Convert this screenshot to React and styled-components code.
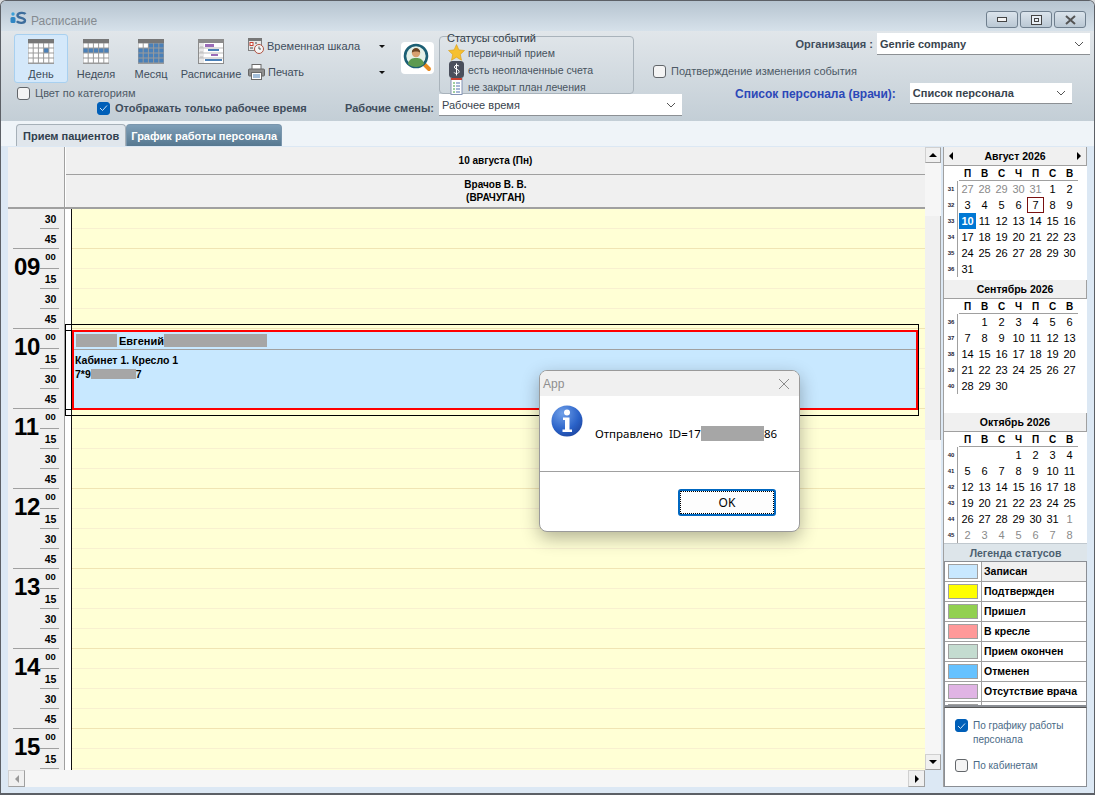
import React from 'react';
import styled, { createGlobalStyle } from 'styled-components';

const GlobalStyle = createGlobalStyle`
  html, body {
    margin: 0;
    padding: 0;
    background: #d8dadc;
    overflow: hidden;
  }
  * { box-sizing: border-box; }
`;

const Window = styled.div`
  width: 1095px;
  height: 795px;
  display: flex;
  flex-direction: column;
  position: relative;
  overflow: hidden;
  border: 1px solid #5c6066;
  border-bottom-width: 2px;
  border-radius: 6px 6px 0 0;
  background: #dce8f4;
  font-family: "Liberation Sans", Arial, sans-serif;
  color: #000;
`;

const TitleBar = styled.div`
  height: 30px;
  flex: none;
  display: flex;
  align-items: flex-start;
  padding: 10px 8px 0 9px;
  background: linear-gradient(to bottom, #b6c4d0, #d6e1ea);
`;

const TitleText = styled.span`
  margin-left: 4px;
  margin-top: 3px;
  font-size: 12px;
  color: #858b91;
`;

const WindowButtons = styled.div`
  margin-left: auto;
  display: flex;
  gap: 2px;
`;

const WindowButton = styled.div`
  width: 32px;
  height: 17px;
  display: flex;
  align-items: center;
  justify-content: center;
  border: 1px solid #6f7f8e;
  border-radius: 3px;
  background: linear-gradient(to bottom, #dbe4ec, #bac8d4);
`;

const Ribbon = styled.div`
  height: 90px;
  flex: none;
  display: flex;
  padding-left: 13px;
  background: linear-gradient(to bottom, #e1e6ea, #c3ced6);
`;

const LeftGroup = styled.div`
  width: 424px;
  flex: none;
  display: flex;
  flex-direction: column;
`;

const ToolRow = styled.div`
  display: flex;
  margin-top: 3px;
  height: 49px;
`;

const ToolButton = styled.div`
  width: ${(p) => p.$w}px;
  height: 49px;
  display: flex;
  flex-direction: column;
  align-items: center;
  justify-content: flex-end;
  padding-bottom: 2px;
  gap: 4px;
  font-size: 11px;
  color: #3f4d5c;
  border: 1px solid ${(p) => (p.$active ? '#a8d0f0' : 'transparent')};
  border-radius: 3px;
  background: ${(p) => (p.$active ? '#d4e8fa' : 'transparent')};
`;

const SmallTools = styled.div`
  width: 145px;
  margin-left: 4px;
  display: flex;
  flex-direction: column;
  gap: 8px;
  padding-top: 3px;
`;

const SmallTool = styled.div`
  display: flex;
  align-items: center;
  gap: 3px;
  height: 18px;
  font-size: 11px;
  color: #3f4d5c;
`;

const DropArrow = styled.span`
  margin-left: auto;
  margin-right: 8px;
  width: 0;
  height: 0;
  border-left: 3px solid transparent;
  border-right: 3px solid transparent;
  border-top: 3px solid #111;
`;

const SearchButton = styled.div`
  width: 33px;
  height: 32px;
  margin-left: 8px;
  margin-top: 8px;
  border-radius: 4px;
  background: #fff;
  display: flex;
  align-items: center;
  justify-content: center;
`;

const CheckRow = styled.label`
  display: flex;
  align-items: center;
  gap: 5px;
  font-size: 11px;
  color: ${(p) => p.$color || '#4d5a66'};
  font-weight: ${(p) => (p.$bold ? 700 : 400)};
`;

const CategoryRow = styled(CheckRow)`
  margin-top: 3px;
  margin-left: 3px;
  height: 14px;
`;

const ShiftRow = styled.div`
  display: flex;
  align-items: center;
  height: 16px;
  margin-top: 0;
  padding-left: 83px;
  padding-right: 4px;
`;

const ShiftLabel = styled.span`
  margin-left: auto;
  font-size: 11px;
  font-weight: 700;
  color: #3f4d5c;
`;

const Box = styled.span`
  width: 13px;
  height: 13px;
  flex: none;
  display: flex;
  align-items: center;
  justify-content: center;
  border-radius: 3px;
  border: 1px solid ${(p) => (p.$on ? '#005fb8' : '#62666a')};
  background: ${(p) => (p.$on ? '#005fb8' : '#f4f4f4')};
`;

const MiddleGroup = styled.div`
  width: 244px;
  flex: none;
  display: flex;
  flex-direction: column;
  margin-left: 1px;
`;

const StatusBox = styled.div`
  width: 195px;
  height: 58px;
  margin-top: 5px;
  position: relative;
  border: 1px solid #a9b3bb;
  border-radius: 4px;
  padding: 7px 0 0 8px;
  display: flex;
  flex-direction: column;
`;

const StatusTitle = styled.span`
  position: absolute;
  left: 7px;
  top: -5px;
  font-size: 11px;
  font-weight: 400;
  color: #333d47;
  line-height: 13px;
`;

const StatusRow = styled.div`
  display: flex;
  align-items: center;
  height: 17.5px;
  gap: 3px;
  font-size: 10.5px;
  color: #47535e;
`;

const Select = styled.div`
  width: ${(p) => p.$w}px;
  height: ${(p) => p.$h || 22}px;
  flex: none;
  display: flex;
  align-items: center;
  justify-content: space-between;
  padding: 0 6px 0 3px;
  background: #fff;
  border-bottom: 1px solid #8c9094;
  font-size: 11px;
  color: #38434d;
`;

const RightGroup = styled.div`
  flex: 1;
  display: flex;
  flex-direction: column;
`;

const OrgRow = styled.div`
  display: flex;
  justify-content: flex-end;
  align-items: center;
  gap: 4px;
  margin-top: 2px;
  padding-right: 4px;
  font-size: 11px;
  font-weight: 700;
  color: #3f4d5c;
`;

const ConfirmRow = styled(CheckRow)`
  margin: 9px 0 0 -30px;
  height: 14px;
`;

const StaffRow = styled.div`
  display: flex;
  align-items: center;
  margin-top: 5px;
  padding-left: 52px;
  gap: 14px;
  font-size: 12px;
  font-weight: 700;
  color: #2c48b8;
`;

const TabStrip = styled.div`
  height: 25px;
  flex: none;
  display: flex;
  align-items: flex-end;
  padding-left: 15px;
  background: #eff4f8;
`;

const Tab = styled.div`
  height: 22px;
  display: flex;
  align-items: center;
  padding: 0 ${(p) => (p.$active ? 6 : 4)}px;
  font-size: 11px;
  font-weight: 700;
  border: 1px solid ${(p) => (p.$active ? '#a6b0b8' : '#7a96ad')};
  border-bottom: none;
  border-radius: 4px 4px 0 0;
  color: ${(p) => (p.$active ? '#31404e' : '#fff')};
  background: ${(p) =>
    p.$active ? '#e0e6ec' : 'linear-gradient(to bottom, #7f9fb8, #567890)'};
`;

const Main = styled.div`
  flex: 1;
  min-height: 0;
  display: flex;
  padding: 1px 7px 0;
`;

const SchedulePane = styled.div`
  width: 933px;
  flex: none;
  display: flex;
  flex-direction: column;
  height: 640px;
`;

const ScheduleTop = styled.div`
  flex: 1;
  min-height: 0;
  display: flex;
`;

const Grid = styled.div`
  width: 917px;
  flex: none;
  display: flex;
  flex-direction: column;
`;

const HeadRow = styled.div`
  display: flex;
  height: 62px;
  flex: none;
  background: #f0f0f0;
  border-bottom: 2px solid #a0a0a0;
`;

const HeadCorner = styled.div`
  width: 57px;
  flex: none;
  border-right: 1px solid #a0a0a0;
`;

const HeadColumns = styled.div`
  flex: 1;
  display: flex;
  flex-direction: column;
  border-left: 1px solid #fff;
`;

const HeadDate = styled.div`
  height: 28px;
  flex: none;
  display: flex;
  align-items: center;
  justify-content: center;
  border-bottom: 1px solid #a0a0a0;
  font-size: 10px;
  font-weight: 700;
`;

const HeadDoctor = styled.div`
  flex: 1;
  display: flex;
  align-items: center;
  justify-content: center;
  text-align: center;
  font-size: 10px;
  line-height: 13px;
  font-weight: 700;
`;

const GridBody = styled.div`
  flex: 1;
  min-height: 0;
  display: flex;
  overflow: hidden;
  position: relative;
`;

const TimeColumn = styled.div`
  width: 57px;
  flex: none;
  background: #f0f0f0;
  border-right: 1px solid #a0a0a0;
`;

const HourBlock = styled.div`
  position: relative;
  padding-left: 6px;
  display: flex;
`;

const HourNumber = styled.div`
  width: 26px;
  flex: none;
  font-size: 24px;
  font-weight: 700;
  line-height: 28px;
  margin-top: 4px;
  letter-spacing: -0.3px;
`;

const MinuteColumn = styled.div`
  width: 19px;
  flex: none;
`;

const HourLine = styled.div`
  position: absolute;
  left: 5px;
  right: 5px;
  top: -1px;
  height: 1px;
  background: #a0a0a0;
`;

const Minute = styled.div`
  height: 20px;
  border-bottom: 1px solid #a0a0a0;
  display: flex;
  align-items: center;
  justify-content: center;
  font-size: ${(p) => (p.$top ? 9.5 : 10.5)}px;
  font-weight: 700;
  padding-bottom: ${(p) => (p.$top ? 4 : 0)}px;
  padding-left: 2px;
`;

const FirstMinutes = styled.div`
  padding-left: 32px;
  width: 51px;
`;

const WhiteGutter = styled.div`
  width: 7px;
  flex: none;
  background: #fff;
  border-right: 1px solid #111;
`;

const Slots = styled.div`
  flex: 1;
  background: #ffffd5;
`;

const Slot = styled.div`
  height: 20px;
  border-bottom: 1px solid ${(p) => (p.$hour ? '#f0e4b4' : '#f8f0d0')};
`;

const EventFrame = styled.div`
  position: absolute;
  left: 57px;
  top: 115px;
  width: 854px;
  height: 92px;
  border: 1px solid #000;
  padding: 5px 0 5px;
`;

const EventInner = styled.div`
  height: 80px;
  display: flex;
  border-top: 1px solid #000;
  border-bottom: 1px solid #000;
`;

const EventGutter = styled.div`
  width: 6px;
  flex: none;
  background: #fff;
  border-right: 1px solid #000;
`;

const Event = styled.div`
  flex: 1;
  margin: -1px 0;
  background: #c8e8ff;
  border: 2px solid #f00;
  font-size: 10px;
  font-weight: 700;
`;

const EventHead = styled.div`
  height: 18px;
  display: flex;
  align-items: center;
  padding-left: 1px;
  border-bottom: 1px solid #a0a0a0;
  font-size: 11px;
`;

const EventBody = styled.div`
  padding: 3px 1px;
  font-size: 10.5px;
  line-height: 14px;
`;

const Redact = styled.span`
  display: inline-block;
  vertical-align: top;
  height: ${(p) => p.$h}px;
  width: ${(p) => p.$w}px;
  background: #a6a6a6;
  margin: ${(p) => p.$m || '0'};
`;

const VScroll = styled.div`
  width: 16px;
  flex: none;
  display: flex;
  flex-direction: column;
  background: #f4f4f4;
`;

const ScrollButton = styled.div`
  width: ${(p) => p.$w || 16}px;
  height: ${(p) => p.$h || 16}px;
  flex: none;
  background: #f0f0f0;
  border: 1px solid #d0d0d0;
  border-right-color: #a0a0a0;
  border-bottom-color: #a0a0a0;
  display: flex;
  align-items: center;
  justify-content: center;
`;

const Thumb = styled.div`
  flex: none;
  background: #f0f0f0;
  border-right: 1px solid #a0a0a0;
  ${(p) => (p.$h ? `height: ${p.$h}px;` : '')}
  ${(p) => (p.$w ? `width: ${p.$w}px;` : '')}
`;

const Track = styled.div`
  flex: 1;
  background-color: #f6f6f6;
  background-image: radial-gradient(#e4e4e4 0.5px, transparent 0.6px);
  background-size: 2px 2px;
`;

const HScroll = styled.div`
  height: 17px;
  flex: none;
  display: flex;
  background: #f4f4f4;
  width: 917px;
`;

const Sidebar = styled.div`
  width: 144px;
  flex: none;
  margin-left: 2px;
  height: 640px;
  display: flex;
  flex-direction: column;
  background: #fff;
  border-left: 1px solid #a0a0a0;
`;

const MonthHeader = styled.div`
  height: 19px;
  flex: none;
  display: flex;
  align-items: center;
  justify-content: space-between;
  padding: 0 5px;
  background: #f0f0f0;
  border-bottom: 1px solid #a0a0a0;
  border-right: 1px solid #a0a0a0;
  font-size: 10.5px;
  font-weight: 700;
`;

const MonthBody = styled.div`
  height: ${(p) => p.$h}px;
  flex: none;
  padding-left: 1px;
`;

const DayNames = styled.div`
  display: grid;
  grid-template-columns: repeat(7, 17px);
  margin-left: 14px;
  width: 119px;
  height: 15px;
  align-items: center;
  justify-items: center;
  border-bottom: 1px solid #a0a0a0;
  font-size: 10px;
  font-weight: 700;
`;

const WeekRow = styled.div`
  display: flex;
  height: 16px;
`;

const WeekNumber = styled.div`
  width: 13px;
  flex: none;
  border-right: 1px solid #a0a0a0;
  font-size: 6px;
  font-weight: 700;
  text-align: center;
  line-height: 17px;
  margin-right: 1px;
  color: #223;
`;

const DayCell = styled.div`
  width: 17px;
  height: 16px;
  flex: none;
  text-align: center;
  font-size: 11px;
  line-height: 16px;
  color: ${(p) => (p.$today ? '#fff' : p.$muted ? '#8a8a8a' : '#000')};
  font-weight: ${(p) => (p.$today ? 700 : 400)};
  background: ${(p) => (p.$today ? '#0078d4' : 'transparent')};
  box-shadow: ${(p) => (p.$ring ? 'inset 0 0 0 1px #7a1010' : 'none')};
`;

const LegendTitle = styled.div`
  height: 18px;
  flex: none;
  display: flex;
  align-items: center;
  justify-content: center;
  background: #dde5ea;
  font-size: 10.5px;
  font-weight: 700;
  color: #4c5f70;
  border-top: 1px solid #c0c8ce;
`;

const LegendTable = styled.div`
  height: 146px;
  flex: none;
  overflow: hidden;
  border: 1px solid #8a8e94;
  border-bottom-width: 2px;
`;

const LegendRow = styled.div`
  display: flex;
  height: 20px;
  border-bottom: 1px solid #a0a0a0;
`;

const LegendSwatchCell = styled.div`
  width: 37px;
  flex: none;
  border-right: 1px solid #a0a0a0;
  padding: 2px 3px;
`;

const LegendSwatch = styled.div`
  height: 15px;
  border: 1px solid #a0a0a0;
  background: ${(p) => p.$color};
`;

const LegendName = styled.div`
  flex: 1;
  padding-left: 2px;
  font-size: 10.5px;
  font-weight: 700;
  line-height: 18px;
  white-space: nowrap;
  background: ${(p) => (p.$first ? '#f0f0f0' : '#fff')};
`;

const FilterPanel = styled.div`
  flex: 1;
  border: 1px solid #8a8e94;
  border-top: 1px solid #555;
  padding: 11px 0 0 10px;
`;

const FilterRow = styled.div`
  display: flex;
  gap: 5px;
  font-size: 10px;
  line-height: 14px;
  color: #4a6a86;
  margin-bottom: ${(p) => p.$mb || 0}px;
`;

const Dialog = styled.div`
  position: absolute;
  left: 538px;
  top: 369px;
  width: 261px;
  height: 162px;
  display: flex;
  flex-direction: column;
  background: #fff;
  border: 1px solid #9a9a9a;
  border-radius: 8px;
  overflow: hidden;
  box-shadow: 0 6px 18px rgba(0, 0, 0, 0.3);
`;

const DialogTitle = styled.div`
  height: 25px;
  flex: none;
  display: flex;
  align-items: center;
  justify-content: space-between;
  padding: 0 9px 0 3px;
  background: #f0f0f0;
  font-size: 12px;
  color: #8e8e8e;
`;

const DialogBody = styled.div`
  height: 76px;
  flex: none;
  display: flex;
  padding: 9px 0 0 11px;
  border-bottom: 1px solid #a0a0a0;
`;

const DialogText = styled.div`
  margin: 21px 0 0 12px;
  font-family: "Noto Sans", sans-serif;
  font-size: 11.5px;
  line-height: 16px;
  white-space: pre;
`;

const DialogFooter = styled.div`
  flex: 1;
  display: flex;
  justify-content: flex-end;
  padding: 17px 23px 0 0;
`;

const OkButton = styled.div`
  width: 98px;
  height: 27px;
  display: flex;
  align-items: center;
  justify-content: center;
  border: 2px solid #0067c0;
  outline: 1px dotted #000;
  outline-offset: -3px;
  border-radius: 3px;
  background: #fdfdfd;
  font-family: "Noto Sans", sans-serif;
  font-size: 12px;
`;

const Chevron = () => (
  <svg width="10" height="6" viewBox="0 0 10 6">
    <path d="M1 1l4 4 4-4" fill="none" stroke="#555" strokeWidth="1" />
  </svg>
);

const Tick = () => (
  <svg width="9" height="8" viewBox="0 0 9 8">
    <path d="M1 4l2.5 2.5L8 1.5" fill="none" stroke="#cfe3f5" strokeWidth="1" />
  </svg>
);

// calendar icon: filled = list of [col,row] cells painted blue
const CalendarIcon = ({ filled, cols = 5, rows = 4 }) => {
  const cw = 26 / cols;
  const ch = 20 / rows;
  const cells = [];
  for (let r = 0; r < rows; r++) {
    for (let c = 0; c < cols; c++) {
      const on = filled(c, r);
      cells.push(
        <rect
          key={`${c}-${r}`}
          x={c * cw + 0.5}
          y={r * ch + 4.5}
          width={cw - 1}
          height={ch - 1}
          fill={on ? '#4a80b8' : '#fff'}
        />
      );
    }
  }
  return (
    <svg width="26" height="25" viewBox="0 0 26 25">
      <rect x="0" y="0" width="26" height="25" fill="#9a9a9a" />
      <rect x="0" y="0" width="26" height="4" fill="#777" />
      {cells}
    </svg>
  );
};

const ScheduleIcon = () => (
  <svg width="26" height="25" viewBox="0 0 26 25">
    <rect width="26" height="25" fill="#8c8c8c" />
    <rect x="1" y="4" width="24" height="20" fill="#fff" />
    <rect x="1" y="4" width="5" height="20" fill="#e8e8e8" />
    <rect x="7" y="5" width="9" height="3" fill="#9a6cb8" />
    <rect x="10" y="10" width="11" height="2" fill="#4a80b8" />
    <rect x="13" y="15" width="7" height="2" fill="#9a6cb8" />
    <rect x="7" y="20" width="17" height="2" fill="#4a80b8" />
    <path d="M2 8h3M2 13h3M2 18h3M1 9h24M1 14h24M1 19h24" stroke="#bbb" strokeWidth="1" />
  </svg>
);

const TimelineIcon = () => (
  <svg width="16" height="16" viewBox="0 0 16 16">
    <rect x="0.5" y="0.5" width="13" height="12" fill="#e8e8e8" stroke="#808080" />
    <rect x="0" y="0" width="14" height="3" fill="#777" />
    <rect x="2" y="4.5" width="3" height="3" fill="#fff" stroke="#c84030" strokeWidth="1" />
    <path d="M7 5h2M2 10h3" stroke="#999" strokeWidth="2" />
    <circle cx="11" cy="11" r="4.5" fill="#f4f4f4" stroke="#b05040" strokeWidth="1" />
    <path d="M11 8.5V11h2" fill="none" stroke="#555" strokeWidth="1" />
  </svg>
);

const PrintIcon = () => (
  <svg width="17" height="16" viewBox="0 0 17 16">
    <rect x="4" y="0.5" width="9" height="5" fill="#fff" stroke="#6a6a6a" />
    <rect x="0.5" y="5" width="16" height="7" rx="1" fill="#8f8f8f" stroke="#666" />
    <rect x="3.5" y="8.5" width="10" height="7" fill="#fff" stroke="#6a6a6a" />
    <path d="M5 11h7M5 13h7" stroke="#4a80b8" strokeWidth="1" />
  </svg>
);

const SearchPersonIcon = () => (
  <svg width="30" height="30" viewBox="0 0 30 30">
    <path d="M19 19l7 7" stroke="#e88a20" strokeWidth="4" strokeLinecap="round" />
    <circle cx="13" cy="13" r="11" fill="#e4f0e8" stroke="#1c5f74" strokeWidth="2.6" />
    <path d="M5 21c1-5 4-6 8-6s7 1 8 6c-2 2-5 3-8 3s-6-1-8-3z" fill="#5d9a50" />
    <circle cx="13" cy="10" r="4.2" fill="#d8a070" />
    <path d="M8.8 9.5c0-3 2-4.5 4.2-4.5s4.2 1.500 4.200 4.500c-1.500-1.500-6.500-1.500-8.400 0z" fill="#6a4424" />
  </svg>
);

const StarIcon = () => (
  <svg width="17" height="17" viewBox="0 0 17 17">
    <path
      d="M8.500.5l2.400 5.400 5.600.6-4.200 3.900 1.200 5.800-5-3-5 3 1.200-5.800L.5 6.500l5.600-.6z"
      fill="#f6c030"
      stroke="#d89a10"
      strokeWidth="0.6"
    />
  </svg>
);

const DollarIcon = () => (
  <svg width="17" height="17" viewBox="0 0 17 17">
    <rect x="1" y="0" width="15" height="17" rx="3.500" fill="#4a4f5c" />
    <path
      d="M11 5.200C10.400 4 6.500 3.800 6.300 6c-.2 2.400 5 1.900 4.800 4.700-.2 2.300-4.300 2.100-5 .7M8.500 2.500v12"
      fill="none"
      stroke="#fff"
      strokeWidth="1"
    />
  </svg>
);

const PlanIcon = () => (
  <svg width="17" height="17" viewBox="0 0 17 17">
    <rect x="3" y="0.500" width="11" height="16" fill="#fff" stroke="#8494b4" />
    <rect x="3" y="0" width="11" height="2" fill="#c84030" />
    <path d="M5 5h2M5 8h2M5 11h2M5 14h2" stroke="#40a040" strokeWidth="1" />
    <path d="M8 5h4M8 8h4M8 11h4M8 14h4" stroke="#5070b0" strokeWidth="1" />
  </svg>
);

const InfoIcon = () => (
  <svg width="32" height="32" viewBox="0 0 32 32">
    <defs>
      <radialGradient id="infoFill" cx="0.35" cy="0.25" r="0.9">
        <stop offset="0" stopColor="#6f9fe8" />
        <stop offset="0.6" stopColor="#2a62c8" />
        <stop offset="1" stopColor="#1c3f96" />
      </radialGradient>
    </defs>
    <circle cx="16" cy="16" r="15.500" fill="url(#infoFill)" />
    <circle cx="16" cy="7.500" r="3" fill="#fff" />
    <path d="M12 12.500h6.500v12H21v2.500H11.500v-2.500H14V15h-2z" fill="#fff" />
  </svg>
);

const Logo = () => (
  <svg width="17" height="14" viewBox="0 0 17 14">
    <circle cx="3" cy="3" r="1.700" fill="#3aa0d8" />
    <rect x="0.500" y="6" width="5" height="6" rx="1.500" fill="#2f86c4" />
    <path
      d="M15.500 3C14.500 1.500 8 1 7.500 4.300c-.4 3.200 7.800 2 7.500 5.400-.3 2.900-6.500 2.800-8.200.6"
      fill="none"
      stroke="#3d6d9c"
      strokeWidth="2.400"
    />
  </svg>
);

const Triangle = ({ dir, color = '#000', size = 4 }) => {
  const shapes = {
    up: `0,${size} ${size},0 ${size * 2},${size}`,
    down: `0,0 ${size},${size} ${size * 2},0`,
  };
  if (dir === 'left' || dir === 'right') {
    const pts =
      dir === 'left'
        ? `${size},0 0,${size} ${size},${size * 2}`
        : `0,0 ${size},${size} 0,${size * 2}`;
    return (
      <svg width={size} height={size * 2}>
        <polygon points={pts} fill={color} />
      </svg>
    );
  }
  return (
    <svg width={size * 2} height={size}>
      <polygon points={shapes[dir]} fill={color} />
    </svg>
  );
};

const HOURS = ['09', '10', '11', '12', '13', '14', '15'];
const WEEK_DAYS = ['П', 'В', 'С', 'Ч', 'П', 'С', 'В'];

const MONTHS = [
  {
    title: 'Август 2026',
    arrows: true,
    height: 114,
    weeks: [
      ['31', [27, 28, 29, 30, 31, 1, 2]],
      ['32', [3, 4, 5, 6, 7, 8, 9]],
      ['33', [10, 11, 12, 13, 14, 15, 16]],
      ['34', [17, 18, 19, 20, 21, 22, 23]],
      ['35', [24, 25, 26, 27, 28, 29, 30]],
      ['36', [31]],
    ],
    muted: (w, d) => w === 0 && d < 5,
    today: 10,
    ring: 7,
  },
  {
    title: 'Сентябрь 2026',
    height: 114,
    weeks: [
      ['36', ['', 1, 2, 3, 4, 5, 6]],
      ['37', [7, 8, 9, 10, 11, 12, 13]],
      ['38', [14, 15, 16, 17, 18, 19, 20]],
      ['39', [21, 22, 23, 24, 25, 26, 27]],
      ['40', [28, 29, 30]],
    ],
    muted: () => false,
  },
  {
    title: 'Октябрь 2026',
    height: 111,
    weeks: [
      ['40', ['', '', '', 1, 2, 3, 4]],
      ['41', [5, 6, 7, 8, 9, 10, 11]],
      ['42', [12, 13, 14, 15, 16, 17, 18]],
      ['43', [19, 20, 21, 22, 23, 24, 25]],
      ['44', [26, 27, 28, 29, 30, 31, 1]],
      ['45', [2, 3, 4, 5, 6, 7, 8]],
    ],
    muted: (w, d) => (w === 4 && d === 6) || w === 5,
  },
];

const LEGEND = [
  ['Записан', '#c8e8ff'],
  ['Подтвержден', '#ffff00'],
  ['Пришел', '#92d050'],
  ['В кресле', '#ff9999'],
  ['Прием окончен', '#c4dcd0'],
  ['Отменен', '#66c2ff'],
  ['Отсутствие врача', '#e0b4e4'],
  ['', '#c0c0c0'],
];

const Month = ({ month }) => (
  <>
    <MonthHeader>
      {month.arrows ? <Triangle dir="left" /> : <span />}
      <span>{month.title}</span>
      {month.arrows ? <Triangle dir="right" /> : <span />}
    </MonthHeader>
    <MonthBody $h={month.height}>
      <DayNames>
        {WEEK_DAYS.map((d, i) => (
          <span key={i}>{d}</span>
        ))}
      </DayNames>
      {month.weeks.map(([num, days], w) => (
        <WeekRow key={num}>
          <WeekNumber>{num}</WeekNumber>
          {days.map((d, i) => (
            <DayCell
              key={i}
              $muted={month.muted(w, i)}
              $today={month.today === d && w > 0}
              $ring={month.ring === d && w > 0}
            >
              {d}
            </DayCell>
          ))}
        </WeekRow>
      ))}
    </MonthBody>
  </>
);

export default function App() {
  return (
    <>
      <GlobalStyle />
      <Window>
        <TitleBar>
          <Logo />
          <TitleText>Расписание</TitleText>
          <WindowButtons>
            <WindowButton>
              <svg width="10" height="5"><rect x="0.5" y="0.5" width="9" height="4" fill="#f4f4f4" stroke="#444" /></svg>
            </WindowButton>
            <WindowButton>
              <svg width="11" height="10"><rect x="0.5" y="0.5" width="10" height="9" fill="#e8eef4" stroke="#444" /><rect x="3.500" y="3.500" width="4" height="3" fill="none" stroke="#444" /></svg>
            </WindowButton>
            <WindowButton>
              <svg width="11" height="10"><path d="M1 1l9 8M10 1l-9 8" stroke="#555" strokeWidth="2" /></svg>
            </WindowButton>
          </WindowButtons>
        </TitleBar>

        <Ribbon>
          <LeftGroup>
            <ToolRow>
              <ToolButton $w={54} $active>
                <CalendarIcon filled={(c, r) => c === 3 && r === 1} />
                День
              </ToolButton>
              <ToolButton $w={56}>
                <CalendarIcon filled={(c, r) => r === 1} />
                Неделя
              </ToolButton>
              <ToolButton $w={54}>
                <CalendarIcon filled={(c, r) => r >= 1 || c >= 2} />
                Месяц
              </ToolButton>
              <ToolButton $w={66}>
                <ScheduleIcon />
                Расписание
              </ToolButton>
              <SmallTools>
                <SmallTool>
                  <TimelineIcon />
                  Временная шкала
                  <DropArrow />
                </SmallTool>
                <SmallTool>
                  <PrintIcon />
                  Печать
                  <DropArrow />
                </SmallTool>
              </SmallTools>
              <SearchButton>
                <SearchPersonIcon />
              </SearchButton>
            </ToolRow>
            <CategoryRow>
              <Box />
              Цвет по категориям
            </CategoryRow>
            <ShiftRow>
              <CheckRow $bold $color="#3f4d5c">
                <Box $on>
                  <Tick />
                </Box>
                Отображать только рабочее время
              </CheckRow>
              <ShiftLabel>Рабочие смены:</ShiftLabel>
            </ShiftRow>
          </LeftGroup>

          <MiddleGroup>
            <StatusBox>
              <StatusTitle>Статусы событий</StatusTitle>
              <StatusRow>
                <StarIcon />
                первичный прием
              </StatusRow>
              <StatusRow>
                <DollarIcon />
                есть неоплаченные счета
              </StatusRow>
              <StatusRow>
                <PlanIcon />
                не закрыт план лечения
              </StatusRow>
            </StatusBox>
            <Select $w={243}>
              Рабочее время
              <Chevron />
            </Select>
          </MiddleGroup>

          <RightGroup>
            <OrgRow>
              Организация :
              <Select $w={213}>
                Genrie company
                <Chevron />
              </Select>
            </OrgRow>
            <ConfirmRow>
              <Box />
              Подтверждение изменения события
            </ConfirmRow>
            <StaffRow>
              Список персонала (врачи):
              <Select $w={162} $h={21}>
                Список персонала
                <Chevron />
              </Select>
            </StaffRow>
          </RightGroup>
        </Ribbon>

        <TabStrip>
          <Tab $active>Прием пациентов</Tab>
          <Tab>График работы персонала</Tab>
        </TabStrip>

        <Main>
          <SchedulePane>
            <ScheduleTop>
              <Grid>
                <HeadRow>
                  <HeadCorner />
                  <HeadColumns>
                    <HeadDate>10 августа (Пн)</HeadDate>
                    <HeadDoctor>
                      Врачов В. В.
                      <br />
                      (ВРАЧУГАН)
                    </HeadDoctor>
                  </HeadColumns>
                </HeadRow>
                <GridBody>
                  <TimeColumn>
                    <FirstMinutes>
                      <Minute>30</Minute>
                      <Minute>45</Minute>
                    </FirstMinutes>
                    {HOURS.map((h) => (
                      <HourBlock key={h}>
                        <HourLine />
                        <HourNumber>{h}</HourNumber>
                        <MinuteColumn>
                          <Minute $top>00</Minute>
                          <Minute>15</Minute>
                          <Minute>30</Minute>
                          <Minute>45</Minute>
                        </MinuteColumn>
                      </HourBlock>
                    ))}
                  </TimeColumn>
                  <WhiteGutter />
                  <Slots>
                    {Array.from({ length: 30 }, (_, i) => (
                      <Slot key={i} $hour={i % 4 === 1} />
                    ))}
                  </Slots>
                  <EventFrame>
                    <EventInner>
                      <EventGutter />
                      <Event>
                        <EventHead>
                          <Redact $w={41} $h={13} $m="0 2px 0 1px" />
                          Евгений
                          <Redact $w={103} $h={13} />
                        </EventHead>
                        <EventBody>
                          Кабинет 1. Кресло 1
                          <br />
                          7*9
                          <Redact $w={45} $h={10} $m="2px 0 0 0" />
                          7
                        </EventBody>
                      </Event>
                    </EventInner>
                  </EventFrame>
                </GridBody>
              </Grid>
              <VScroll>
                <ScrollButton>
                  <Triangle dir="up" />
                </ScrollButton>
                <Track style={{ flex: 'none', height: 53 }} />
                <Thumb $h={224} />
                <Track />
                <ScrollButton>
                  <Triangle dir="down" />
                </ScrollButton>
              </VScroll>
            </ScheduleTop>
            <HScroll>
              <ScrollButton $w={17} $h={17}>
                <Triangle dir="left" color="#999" />
              </ScrollButton>
              <Track />
              <ScrollButton $w={17} $h={17}>
                <Triangle dir="right" />
              </ScrollButton>
            </HScroll>
          </SchedulePane>

          <Sidebar>
            {MONTHS.map((m) => (
              <Month key={m.title} month={m} />
            ))}
            <LegendTitle>Легенда статусов</LegendTitle>
            <LegendTable>
              {LEGEND.map(([name, color], i) => (
                <LegendRow key={i}>
                  <LegendSwatchCell>
                    <LegendSwatch $color={color} />
                  </LegendSwatchCell>
                  <LegendName $first={i === 0}>{name}</LegendName>
                </LegendRow>
              ))}
            </LegendTable>
            <FilterPanel>
              <FilterRow $mb={12}>
                <Box $on>
                  <Tick />
                </Box>
                <span>
                  По графику работы
                  <br />
                  персонала
                </span>
              </FilterRow>
              <FilterRow>
                <Box />
                По кабинетам
              </FilterRow>
            </FilterPanel>
          </Sidebar>
        </Main>

        <Dialog>
          <DialogTitle>
            App
            <svg width="12" height="12" viewBox="0 0 12 12">
              <path d="M1 1l10 10M11 1L1 11" stroke="#8c8c8c" strokeWidth="1" />
            </svg>
          </DialogTitle>
          <DialogBody>
            <InfoIcon />
            <DialogText>
              {'Отправлено  ID=17'}
              <Redact $w={63} $h={15} />
              86
            </DialogText>
          </DialogBody>
          <DialogFooter>
            <OkButton>OK</OkButton>
          </DialogFooter>
        </Dialog>
      </Window>
    </>
  );
}
